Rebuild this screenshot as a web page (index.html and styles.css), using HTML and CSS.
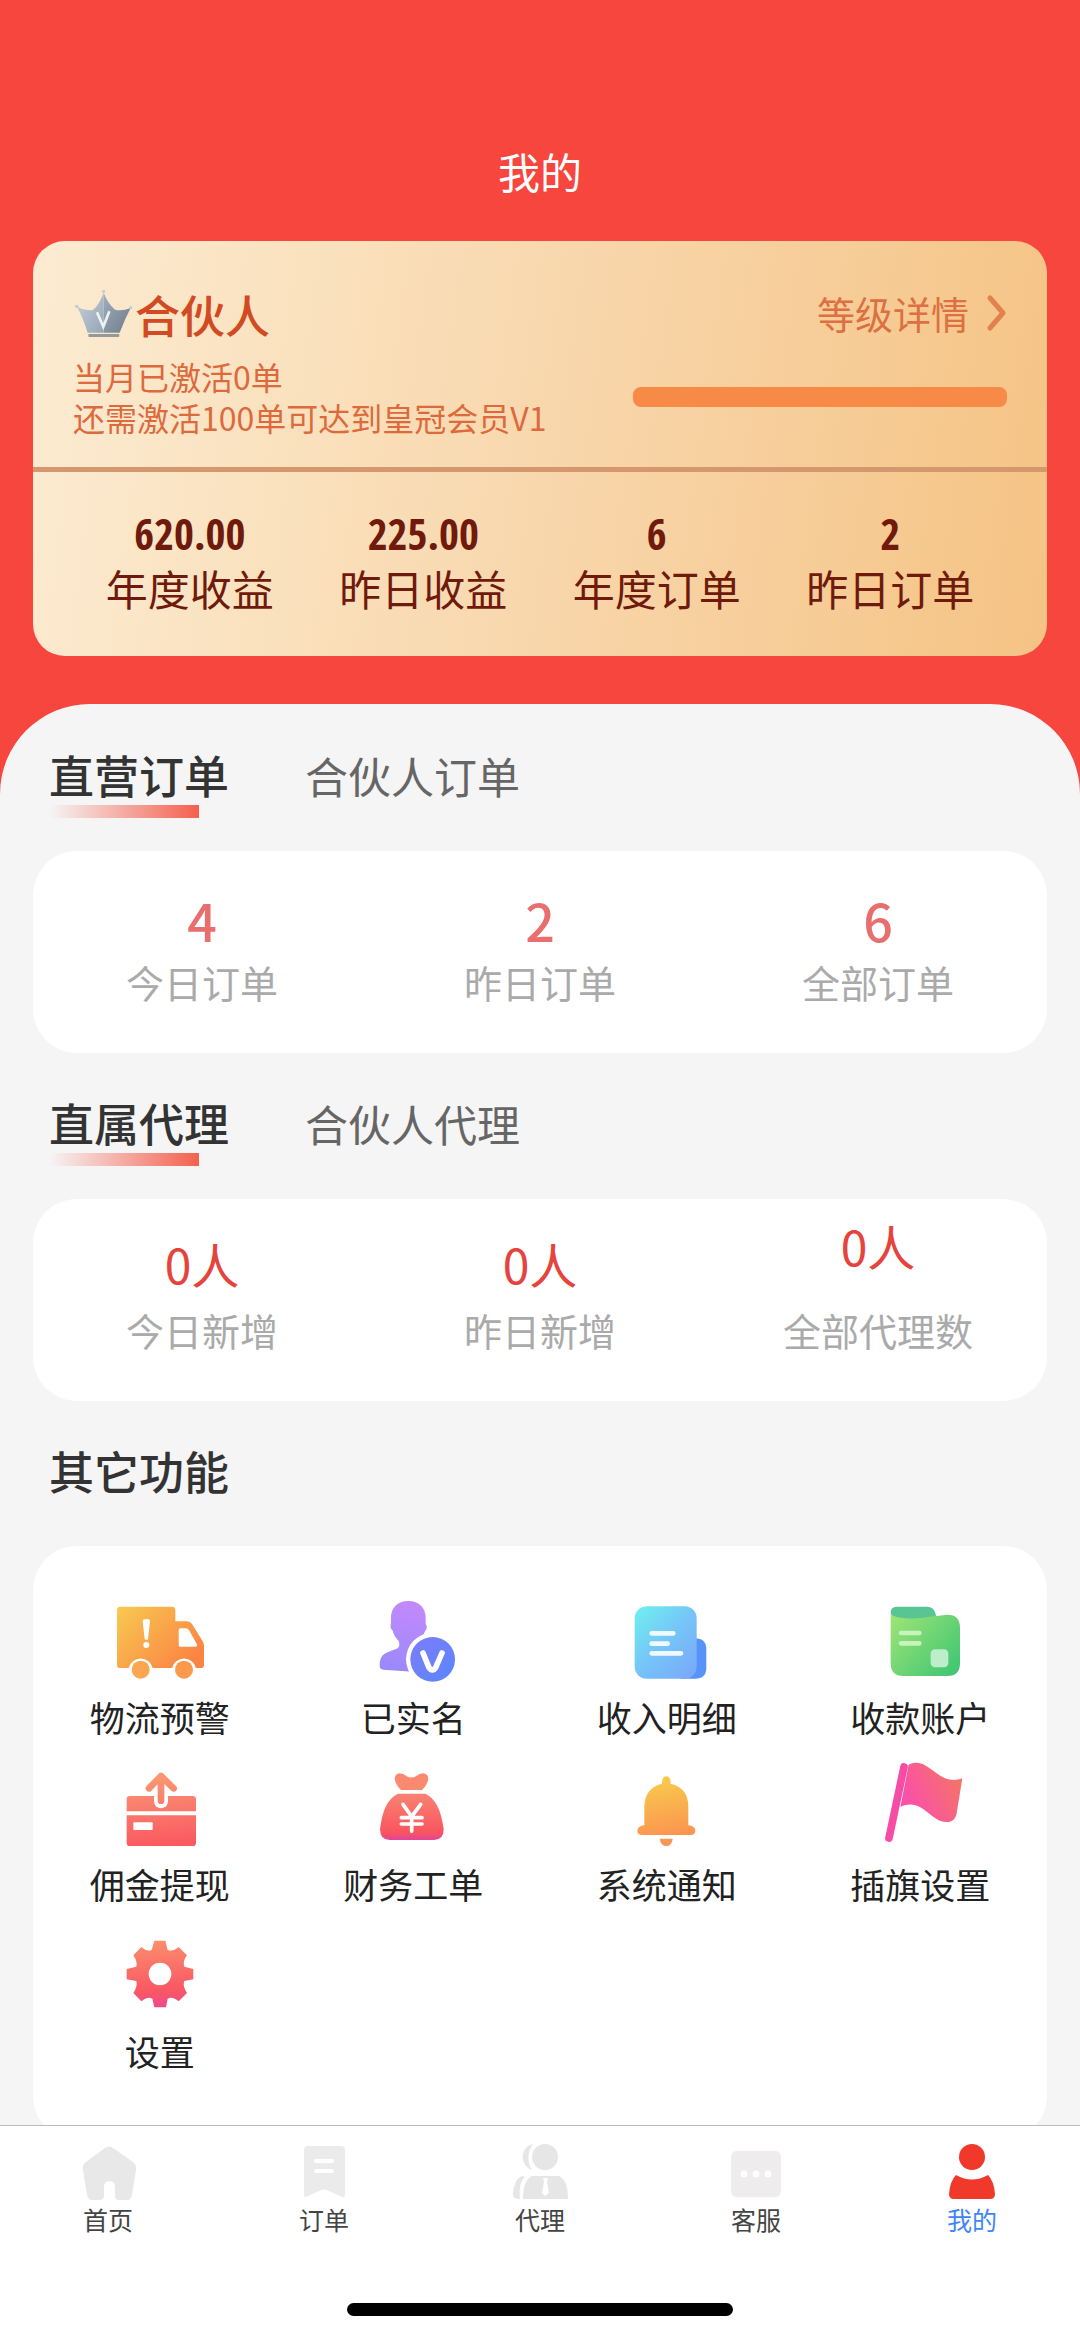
FILE: index.html
```
<!DOCTYPE html>
<html lang="zh-CN">

<head>
    <meta charset="UTF-8" />
    <meta name="viewport" content="width=device-width, initial-scale=1.0">
    <title>我的</title>
    <link rel="stylesheet" href="styles.css">
</head>

<body>
    <header class="header">
        <h1 class="page-title">我的</h1>
    </header>

    <section class="member-card">
        <div class="member-top">
            <div class="member-row">
                <div class="member-name">
                    <svg class="crown" viewBox="24 42 186 150">
                        <defs>
                            <linearGradient id="crownFill" x1="0" y1="0" x2="1" y2="1">
                                <stop offset="0" stop-color="#9fb0bf" />
                                <stop offset="1" stop-color="#6f7a87" />
                            </linearGradient>
                            <linearGradient id="crownLight" x1="0" y1="0" x2="1" y2="1">
                                <stop offset="0" stop-color="#c3d2dd" />
                                <stop offset="1" stop-color="#97a5b3" />
                            </linearGradient>
                        </defs>
                        <path d="M116 50 Q128 82 150 101 Q172 106 197 96 Q180 128 164 170 H116 Z" fill="url(#crownFill)" />
                        <path d="M116 50 Q104 84 84 102 Q60 106 36 92 Q54 126 68 170 H116 Z" fill="url(#crownLight)" />
                        <rect x="70" y="174" width="93" height="9" rx="3" fill="#93989b" />
                        <circle cx="35" cy="91" r="5" fill="#c3ccd2" />
                        <circle cx="116" cy="46" r="5" fill="#c3ccd2" />
                        <circle cx="197" cy="95" r="5" fill="#c3ccd2" />
                        <path d="M96 109 L115 152 L133 106" fill="none" stroke="#edf2f5" stroke-width="8" />
                    </svg>
                    <h2>合伙人</h2>
                </div>
                <a class="level-link" href="#">等级详情
                    <svg class="arrow" viewBox="0 0 20 36"><path d="M3 3 L16 18 L3 33" fill="none" stroke="#e4804f" stroke-width="5" stroke-linecap="round" stroke-linejoin="round" /></svg>
                </a>
            </div>
            <div class="member-row">
                <div class="member-desc">
                    <p>当月已激活0单</p>
                    <p>还需激活100单可达到皇冠会员V1</p>
                </div>
                <progress class="level-progress" value="0" max="100" aria-label="升级进度"></progress>
            </div>
        </div>
        <div class="member-stats">
            <div class="stat"><strong>620.00</strong><span>年度收益</span></div>
            <div class="stat"><strong>225.00</strong><span>昨日收益</span></div>
            <div class="stat"><strong>6</strong><span>年度订单</span></div>
            <div class="stat"><strong>2</strong><span>昨日订单</span></div>
        </div>
    </section>

    <main class="panel">
        <div class="tabs">
            <button type="button" class="tab active">直营订单</button>
            <button type="button" class="tab">合伙人订单</button>
        </div>
        <div class="card counts orders">
            <div class="count"><strong>4</strong><span>今日订单</span></div>
            <div class="count"><strong>2</strong><span>昨日订单</span></div>
            <div class="count"><strong>6</strong><span>全部订单</span></div>
        </div>

        <div class="tabs">
            <button type="button" class="tab active">直属代理</button>
            <button type="button" class="tab">合伙人代理</button>
        </div>
        <div class="card counts agents">
            <div class="count"><strong>0人</strong><span>今日新增</span></div>
            <div class="count"><strong>0人</strong><span>昨日新增</span></div>
            <div class="count raised"><strong>0人</strong><span>全部代理数</span></div>
        </div>

        <h2 class="section-title">其它功能</h2>
        <div class="card features">
            <a class="feature" href="#">
                <svg viewBox="162 54 270 270">
                    <defs>
                        <linearGradient id="truck" x1="0" y1="0" x2="1" y2="0.7">
                            <stop offset="0" stop-color="#f8ca52" />
                            <stop offset="1" stop-color="#fb8443" />
                        </linearGradient>
                    </defs>
                    <path d="M178 83 H332 Q343 83 343 94 V127 H378 Q388 127 393 135 L425 187 Q429 193 429 200 V257 Q429 267 419 267 H405 A37 37 0 0 0 333 267 H275 A37 37 0 0 0 203 267 H178 Q168 267 168 257 V94 Q168 83 178 83 Z" fill="url(#truck)" />
                    <path d="M358 148 H374 Q381 148 384 153 L407 194 Q411 203 402 203 H358 Q353 203 353 198 V153 Q353 148 358 148 Z" fill="#fff" />
                    <path d="M245 127 Q245 120 256 120 Q267 120 267 127 L261 180 Q256 187 251 180 Z" fill="#fff" />
                    <circle cx="256" cy="198" r="9" fill="#fff" />
                    <circle cx="239" cy="272" r="27" fill="#fba650" />
                    <circle cx="369" cy="272" r="27" fill="#fb9a4c" />
                </svg>
                <span>物流预警</span>
            </a>
            <a class="feature" href="#">
                <svg viewBox="924 54 270 270">
                    <defs>
                        <linearGradient id="person" x1="0.6" y1="0" x2="0.4" y2="1">
                            <stop offset="0" stop-color="#c389fb" />
                            <stop offset="1" stop-color="#9a89fb" />
                        </linearGradient>
                        <linearGradient id="verified" x1="0" y1="0" x2="1" y2="1">
                            <stop offset="0" stop-color="#7d7cfb" />
                            <stop offset="1" stop-color="#5a86fb" />
                        </linearGradient>
                    </defs>
                    <path d="M1045 66 C1078 66 1097 88 1097 116 V135 Q1105 146 1095 157 Q1086 180 1072 190 L1080 280 L970 272 Q959 270 959 260 Q959 232 974 224 Q984 218 1010 209 Q1022 203 1016 186 Q1001 170 998 155 Q988 146 993 133 V116 C993 88 1012 66 1045 66 Z" fill="url(#person)" />
                    <circle cx="1118" cy="241" r="80" fill="#fff" />
                    <circle cx="1118" cy="241" r="67" fill="url(#verified)" />
                    <path d="M1089 222 L1107 266 Q1117 280 1127 266 L1146 222" fill="none" stroke="#fff" stroke-width="17" stroke-linecap="round" stroke-linejoin="round" />
                </svg>
                <span>已实名</span>
            </a>
            <a class="feature" href="#">
                <svg viewBox="244 54 270 270">
                    <defs>
                        <linearGradient id="bill" x1="0" y1="0" x2="0.9" y2="1">
                            <stop offset="0" stop-color="#70f1ee" />
                            <stop offset="0.5" stop-color="#75c6f8" />
                            <stop offset="1" stop-color="#7aa9f9" />
                        </linearGradient>
                    </defs>
                    <path d="M440 178 H463 Q497 178 497 212 V266 Q497 299 463 299 H420 Z" fill="#5793f8" />
                    <rect x="282" y="82" width="186" height="217" rx="36" fill="url(#bill)" />
                    <path d="M333 163 H398 M333 194 H381 M333 223 H421" stroke="#eefaff" stroke-width="14" stroke-linecap="round" />
                </svg>
                <span>收入明细</span>
            </a>
            <a class="feature" href="#">
                <svg viewBox="1005 54 270 270">
                    <defs>
                        <linearGradient id="account" x1="0" y1="0.1" x2="1" y2="0.9">
                            <stop offset="0" stop-color="#9be475" />
                            <stop offset="1" stop-color="#3fc573" />
                        </linearGradient>
                    </defs>
                    <path d="M1070 83 H1160 Q1183 83 1188 108 L1180 130 L1060 125 L1052 101 Q1052 83 1070 83 Z" fill="#58c592" />
                    <path d="M1052 105 C1070 122 1130 120 1170 113 L1222 107 Q1260 107 1260 146 V253 Q1260 291 1222 291 H1090 Q1052 291 1052 253 Z" fill="url(#account)" />
                    <path d="M1083 162 H1138 M1083 193 H1138" stroke="#c8f3ba" stroke-width="14" stroke-linecap="round" />
                    <rect x="1172" y="211" width="53" height="54" rx="13" fill="#bdeecb" />
                </svg>
                <span>收款账户</span>
            </a>
            <a class="feature" href="#">
                <svg viewBox="162 554 270 270">
                    <defs>
                        <linearGradient id="withdraw" gradientUnits="userSpaceOnUse" x1="290" y1="580" x2="310" y2="800">
                            <stop offset="0" stop-color="#f99a72" />
                            <stop offset="0.5" stop-color="#f97a6c" />
                            <stop offset="1" stop-color="#fb5860" />
                        </linearGradient>
                    </defs>
                    <path d="M207 650 H395 Q405 650 405 660 V696 H197 V660 Q197 650 207 650 Z" fill="url(#withdraw)" />
                    <path d="M197 708 H405 V790 Q405 800 395 800 H207 Q197 800 197 790 Z" fill="url(#withdraw)" />
                    <path d="M300 620 V666" stroke="#fff" stroke-width="42" stroke-linecap="round" />
                    <path d="M300 590 V664 M264 627 L300 590 L338 627" fill="none" stroke="url(#withdraw)" stroke-width="20" stroke-linecap="round" stroke-linejoin="round" />
                    <rect x="217" y="729" width="58" height="23" rx="3" fill="#fff" />
                </svg>
                <span>佣金提现</span>
            </a>
            <a class="feature" href="#">
                <svg viewBox="924 554 270 270">
                    <defs>
                        <linearGradient id="bag" x1="0.5" y1="0" x2="0.5" y2="1">
                            <stop offset="0" stop-color="#f98373" />
                            <stop offset="0.85" stop-color="#f9545f" />
                            <stop offset="1" stop-color="#e0439a" />
                        </linearGradient>
                    </defs>
                    <path d="M1018 582 Q1030 582 1040 591 Q1054 598 1068 591 Q1078 582 1090 582 Q1105 584 1105 600 Q1100 620 1086 632 H1023 Q1008 618 1004 600 Q1004 584 1018 582 Z" fill="#f98a70" />
                    <path d="M1014 643 H1096 Q1140 662 1151 750 Q1151 782 1122 782 H989 Q960 782 960 750 Q970 662 1014 643 Z" fill="url(#bag)" />
                    <path d="M1029 675 L1055 712 L1082 675 M1024 715 H1086 M1024 734 H1086 M1055 712 V756" fill="none" stroke="#fff" stroke-width="11" stroke-linecap="round" />
                </svg>
                <span>财务工单</span>
            </a>
            <a class="feature" href="#">
                <svg viewBox="244 554 270 270">
                    <defs>
                        <linearGradient id="bell" x1="0.4" y1="0" x2="0.6" y2="1">
                            <stop offset="0" stop-color="#f9cc4c" />
                            <stop offset="1" stop-color="#fb9550" />
                        </linearGradient>
                    </defs>
                    <path d="M377 591 Q391 592 390 613 Q443 626 443 682 V738 Q464 740 464 754 Q463 767 450 767 H304 Q291 767 290 754 Q291 740 311 738 V682 Q312 626 364 613 Q363 592 377 591 Z" fill="url(#bell)" />
                    <path d="M357 778 H396 Q394 800 377 800 Q360 800 357 778 Z" fill="#f89858" />
                </svg>
                <span>系统通知</span>
            </a>
            <a class="feature" href="#">
                <svg viewBox="1005 554 270 270">
                    <defs>
                        <linearGradient id="flag" x1="0.2" y1="0.7" x2="1" y2="0.3">
                            <stop offset="0" stop-color="#fa52a6" />
                            <stop offset="1" stop-color="#f57465" />
                        </linearGradient>
                    </defs>
                    <path d="M1092 563 L1047 776" stroke="#f64ca6" stroke-width="23" stroke-linecap="round" />
                    <path d="M1106 556 C1165 525 1195 625 1267 597 L1250 702 Q1247 722 1230 727 C1175 740 1150 650 1081 683 Z" fill="url(#flag)" />
                </svg>
                <span>插旗设置</span>
            </a>
            <a class="feature" href="#">
                <svg viewBox="162 93 270 270">
                    <defs>
                        <linearGradient id="gear" gradientUnits="userSpaceOnUse" x1="290" y1="122" x2="300" y2="322">
                            <stop offset="0" stop-color="#fb8e6d" />
                            <stop offset="0.75" stop-color="#fa5764" />
                            <stop offset="1" stop-color="#ee4a8c" />
                        </linearGradient>
                    </defs>
                    <path d="M280 122 H313 L320 150 Q335 156 353 141 L378 166 Q364 184 370 200 L397 207 V238 L370 243 Q364 258 378 279 L353 304 Q335 288 320 296 L315 322 H280 L274 296 Q258 288 241 304 L217 279 Q230 260 226 243 L197 238 V207 L226 200 Q230 184 217 166 L241 141 Q258 156 272 150 Z M297 188 A34 34 0 1 0 297 256 A34 34 0 1 0 297 188 Z" fill="url(#gear)" fill-rule="evenodd" />
                </svg>
                <span>设置</span>
            </a>
        </div>
    </main>

    <nav class="tabbar">
        <div class="tabbar-items">
            <a href="#">
                <svg viewBox="0 0 60 60">
                    <path d="M27 5 Q31 2 35 5 L55 19 Q59 22 58 27 L54 52 Q53 57 49 57 H41 Q37 57 37 53 V44 Q37 38 31 38 Q26 38 26 44 V53 Q26 57 21 57 H14 Q10 57 9 52 L5 27 Q4 22 8 19 Z" fill="#e8e8e8" />
                </svg>
                <span>首页</span>
            </a>
            <a href="#">
                <svg viewBox="0 0 60 60">
                    <path d="M14 3 H47 Q51 3 51 7 V51 Q51 56 46 53 L35 48 Q30 45 25 48 L14 53 Q10 56 10 51 V7 Q10 3 14 3 Z" fill="#ebebeb" />
                    <path d="M22 18 H38 M22 28 H38" stroke="#fff" stroke-width="4" stroke-linecap="round" />
                </svg>
                <span>订单</span>
            </a>
            <a href="#">
                <svg viewBox="0 0 60 60">
                    <g fill="#e6e6e6">
                        <circle cx="35" cy="14" r="13" />
                        <path d="M23 1 C10 4 9 22 22 27 C17 19 17 9 23 1 Z" />
                        <path d="M22 33 H49 Q58 37 58 56 H13 Q13 37 22 33 Z" />
                        <path d="M13 33 C6 34 3 44 3 52 Q3 56 10 56 C9 46 10 38 15 34 Z" />
                    </g>
                    <path d="M33 35 H38 L37 39 L39 50 L35 53 L32 50 L34 39 Z" fill="#fff" />
                </svg>
                <span>代理</span>
            </a>
            <a href="#">
                <svg viewBox="0 0 60 60">
                    <rect x="5" y="8" width="50" height="46" rx="6" fill="#eeecec" />
                    <g fill="#fff">
                        <circle cx="18" cy="31" r="3.5" />
                        <circle cx="30" cy="31" r="3.5" />
                        <circle cx="42" cy="31" r="3.5" />
                    </g>
                </svg>
                <span>客服</span>
            </a>
            <a href="#" class="current">
                <svg viewBox="0 0 60 60">
                    <g fill="#f0382b">
                        <circle cx="30" cy="14" r="13" />
                        <path d="M14 32 Q30 41 46 32 Q52 38 53 51 Q53 56 48 56 H12 Q7 56 7 51 Q8 38 14 32 Z" />
                    </g>
                </svg>
                <span>我的</span>
            </a>
        </div>
        <div class="home-indicator"></div>
    </nav>
</body>

</html>
```
FILE: styles.css
```
* {
    box-sizing: border-box;
}

body {
    margin: 0;
    min-height: 100vh;
    background-color: #f7463e;
    color: #333;
    font-family: "Noto Sans CJK SC", sans-serif;
    display: flex;
    flex-direction: column;
}

h1,
h2,
p {
    margin: 0;
}

a {
    color: inherit;
    text-decoration: none;
}

svg {
    display: block;
    overflow: visible;
}

.header {
    padding: 141px 0 40px;
}

.page-title {
    font-size: 42px;
    font-weight: 400;
    line-height: 60px;
    text-align: center;
    color: #fff;
}

/* member card */
.member-card {
    margin: 0 33px 48px;
    border-radius: 32px;
    overflow: hidden;
    background: linear-gradient(98deg, #fcebd2 0%, #fae2bf 25%, #f8d5a9 55%, #f5c384 100%);
    color: #6f1a0c;
}

.member-top {
    display: flex;
    flex-direction: column;
    gap: 16px;
    padding: 49px 40px 29px;
    border-bottom: 5px solid #d5976e;
}

.member-row {
    display: flex;
    align-items: center;
    justify-content: space-between;
}

.member-name {
    display: flex;
    align-items: center;
    color: #d24a22;
}

.member-name h2 {
    font-size: 45px;
    font-weight: 500;
    line-height: 50px;
}

.crown {
    width: 62px;
    height: 50px;
}

.level-link {
    display: flex;
    align-items: center;
    gap: 18px;
    font-size: 38px;
    line-height: 46px;
    margin-bottom: 4px;
    color: #dc7042;
}

.arrow {
    width: 20px;
    height: 36px;
}

.member-desc {
    font-size: 32px;
    line-height: 41px;
    color: #dd6a3c;
}

.level-progress {
    -webkit-appearance: none;
    appearance: none;
    width: 40%;
    height: 20px;
    border: none;
    border-radius: 8px;
    background-color: #f78a47;
    overflow: hidden;
}

.level-progress::-webkit-progress-bar {
    background-color: #f78a47;
}

.member-stats {
    display: grid;
    grid-template-columns: repeat(4, 1fr);
    padding: 37px 40px 39px;
}

.stat {
    display: flex;
    flex-direction: column;
    align-items: center;
}

.stat strong {
    font-family: "Open Sans Condensed", "Liberation Sans Narrow", "Noto Sans CJK SC", sans-serif;
    font-size: 43px;
    font-weight: 600;
    line-height: 50px;
}

.stat span {
    font-size: 42px;
    line-height: 58px;
}

/* grey panel */
.panel {
    flex: 1;
    padding: 41px 33px 0;
    border-radius: 90px 90px 0 0;
    background-color: #f5f5f5;
}

.tabs {
    display: flex;
    align-items: flex-start;
    gap: 76px;
    padding-left: 16px;
    margin-bottom: 33px;
}

.tab {
    padding: 0;
    border: none;
    background: none;
    font-family: inherit;
    font-size: 43px;
    line-height: 60px;
    color: #666;
}

.tab.active {
    font-size: 45px;
    font-weight: 500;
    color: #333;
}

.tab.active::after {
    content: "";
    display: block;
    width: 150px;
    height: 13px;
    background: linear-gradient(to right, #f5f5f5, #f4604e);
}

.card {
    border-radius: 44px;
    background-color: #fff;
}

.counts {
    display: grid;
    grid-template-columns: repeat(3, 1fr);
    min-height: 202px;
    margin-bottom: 40px;
}

.count {
    display: flex;
    flex-direction: column;
    align-items: center;
    justify-content: space-between;
    padding: 39px 0 48px;
}

.count span {
    font-size: 38px;
    line-height: 46px;
    color: #aaa;
}

.orders strong {
    font-size: 52px;
    font-weight: 500;
    line-height: 60px;
    color: #e86f6e;
}

.agents strong {
    font-size: 48px;
    font-weight: 400;
    line-height: 50px;
    color: #e5433b;
}

.count.raised {
    padding-top: 21px;
}

.section-title {
    margin-bottom: 45px;
    padding-left: 16px;
    font-size: 45px;
    font-weight: 500;
    line-height: 60px;
}

.features {
    display: grid;
    grid-template-columns: repeat(4, 1fr);
    row-gap: 27px;
    padding: 51px 0 69px;
}

.feature {
    display: flex;
    flex-direction: column;
    align-items: center;
    gap: 10px;
    color: #222;
}

.feature svg {
    width: 90px;
    height: 90px;
}

.feature span {
    font-size: 35px;
    line-height: 40px;
}

/* bottom bar */
.tabbar {
    position: fixed;
    left: 0;
    right: 0;
    bottom: 0;
    border-top: 1px solid #bbb;
    background-color: #fff;
}

.tabbar-items {
    display: grid;
    grid-template-columns: repeat(5, 1fr);
    padding: 17px 0 68px;
}

.tabbar-items a {
    display: flex;
    flex-direction: column;
    align-items: center;
    color: #444;
}

.tabbar-items svg {
    width: 60px;
    height: 60px;
}

.tabbar-items span {
    font-size: 25px;
    line-height: 32px;
}

.tabbar-items .current {
    color: #4285f4;
}

.home-indicator {
    width: 386px;
    height: 13px;
    margin: 0 auto 21px;
    border-radius: 7px;
    background-color: #000;
}
```
